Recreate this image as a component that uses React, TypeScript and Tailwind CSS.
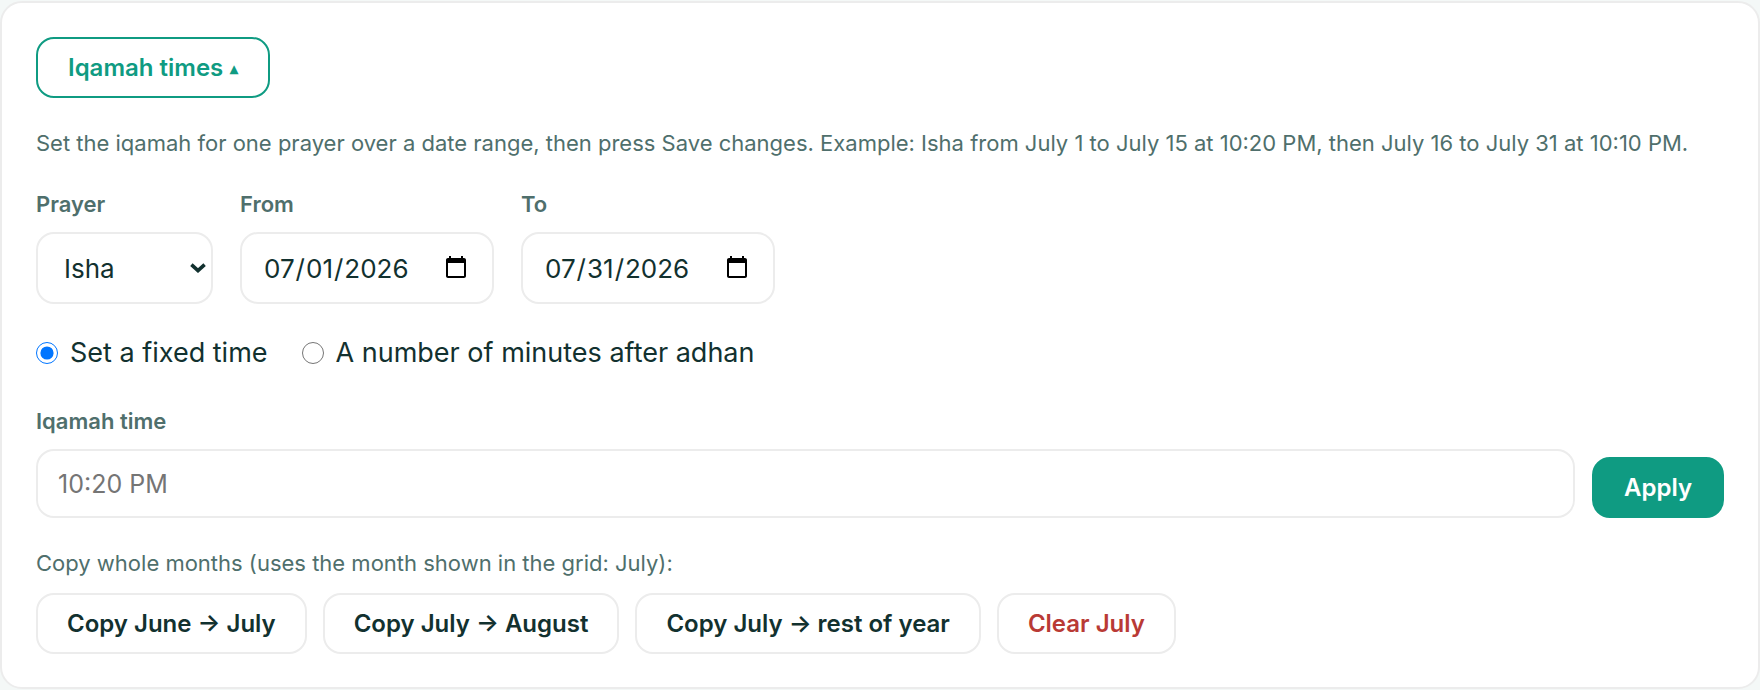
import { useState } from "react";
import type { ReactNode } from "react";
import clsx from "clsx";

type Mode = "fixed" | "offset";

const PRAYERS = ["Fajr", "Dhuhr", "Asr", "Maghrib", "Isha"];

const LABEL = "text-[22px] leading-7 font-semibold text-[#4f6f6c]";
const FIELD = "rounded-[18px] border-2 border-[#ececec] bg-white text-[#12312f]";
const HINT = "text-[22px] leading-8 text-[#4f6f6c]";
const COPY_BUTTON = "border-[#ececec] bg-white px-[29px]";

interface ButtonProps {
  children: ReactNode;
  className: string;
  onClick?: () => void;
}

function Button({ children, className, onClick }: ButtonProps) {
  return (
    <button
      type="button"
      onClick={onClick}
      className={clsx(
        "flex h-[61px] items-center gap-[7px] rounded-[18px] border-2 text-[24px] leading-8 font-semibold",
        className
      )}
    >
      {children}
    </button>
  );
}

interface DateFieldProps {
  id: string;
  label: string;
  value: string;
  onChange: (value: string) => void;
}

function DateField({ id, label, value, onChange }: DateFieldProps) {
  return (
    <div className="flex flex-col gap-[14px]">
      <label htmlFor={id} className={LABEL}>
        {label}
      </label>
      <input
        id={id}
        type="date"
        value={value}
        onChange={(e) => onChange(e.target.value)}
        className={clsx(
          FIELD,
          "h-[72px] w-[254px] pr-[23px] pl-[21px] text-[26px] [&::-webkit-calendar-picker-indicator]:size-[26px] [&::-webkit-calendar-picker-indicator]:p-0"
        )}
      />
    </div>
  );
}

interface ModeOptionProps {
  label: string;
  checked: boolean;
  onChange: () => void;
}

function ModeOption({ label, checked, onChange }: ModeOptionProps) {
  return (
    <label className="flex items-center gap-3 text-[27px] leading-9 text-[#12312f]">
      <input type="radio" name="mode" checked={checked} onChange={onChange} className="size-[22px]" />
      {label}
    </label>
  );
}

export default function App() {
  const [open, setOpen] = useState(true);
  const [prayer, setPrayer] = useState("Isha");
  const [from, setFrom] = useState("2026-07-01");
  const [to, setTo] = useState("2026-07-31");
  const [mode, setMode] = useState<Mode>("fixed");
  const [time, setTime] = useState("");

  return (
    <div className="min-h-screen bg-[#f4f8f7] pt-px font-['Inter',sans-serif]">
      <section className="rounded-[22px] border-2 border-[#ececec] bg-white px-[34px] pt-[34px] pb-[33px]">
        <Button onClick={() => setOpen(!open)} className="border-[#0f9b82] bg-white px-[30px] text-[#0f9b82]">
          Iqamah times <span className="text-[16px]">{open ? "▴" : "▾"}</span>
        </Button>

        {open && (
          <>
            <p className={clsx(HINT, "mt-[29px]")}>
              Set the iqamah for one prayer over a date range, then press Save changes. Example: Isha from July 1 to
              July 15 at 10:20 PM, then July 16 to July 31 at 10:10 PM.
            </p>

            <div className="mt-[31px] flex flex-wrap gap-[27px]">
              <div className="flex flex-col gap-[14px]">
                <label htmlFor="prayer" className={LABEL}>
                  Prayer
                </label>
                <div className="relative">
                  <select
                    id="prayer"
                    value={prayer}
                    onChange={(e) => setPrayer(e.target.value)}
                    className={clsx(FIELD, "h-[72px] w-[177px] appearance-none pr-10 pl-[26px] text-[26px]")}
                  >
                    {PRAYERS.map((name) => (
                      <option key={name}>{name}</option>
                    ))}
                  </select>
                  <svg
                    viewBox="0 0 16 10"
                    className="pointer-events-none absolute top-[31px] right-[7px] h-[10px] w-4"
                    fill="none"
                    stroke="#12312f"
                    strokeWidth="3.6"
                  >
                    <path d="M1.4 1.6 8 7.6l6.6-6" />
                  </svg>
                </div>
              </div>
              <DateField id="from" label="From" value={from} onChange={setFrom} />
              <DateField id="to" label="To" value={to} onChange={setTo} />
            </div>

            <div className="mt-[31px] flex flex-wrap gap-x-[34px] gap-y-3">
              <ModeOption label="Set a fixed time" checked={mode === "fixed"} onChange={() => setMode("fixed")} />
              <ModeOption
                label="A number of minutes after adhan"
                checked={mode === "offset"}
                onChange={() => setMode("offset")}
              />
            </div>

            <div className="mt-9 flex items-end gap-[17px]">
              <div className="flex flex-1 flex-col gap-[14px]">
                <label htmlFor="time" className={LABEL}>
                  {mode === "fixed" ? "Iqamah time" : "Minutes after adhan"}
                </label>
                <input
                  id="time"
                  type="text"
                  value={time}
                  onChange={(e) => setTime(e.target.value)}
                  placeholder={mode === "fixed" ? "10:20 PM" : "10"}
                  className={clsx(FIELD, "h-[69px] w-full px-5 text-[25px] placeholder:text-[#757575]")}
                />
              </div>
              <Button className="border-[#0f9b82] bg-[#0f9b82] px-[30px] text-white">Apply</Button>
            </div>

            <p className={clsx(HINT, "mt-[29px]")}>Copy whole months (uses the month shown in the grid: July):</p>
            <div className="mt-[14px] flex flex-wrap gap-4">
              <Button className={clsx(COPY_BUTTON, "text-[#12312f]")}>Copy June → July</Button>
              <Button className={clsx(COPY_BUTTON, "text-[#12312f]")}>Copy July → August</Button>
              <Button className={clsx(COPY_BUTTON, "text-[#12312f]")}>Copy July → rest of year</Button>
              <Button className={clsx(COPY_BUTTON, "text-[#b93a35]")}>Clear July</Button>
            </div>
          </>
        )}
      </section>
    </div>
  );
}
